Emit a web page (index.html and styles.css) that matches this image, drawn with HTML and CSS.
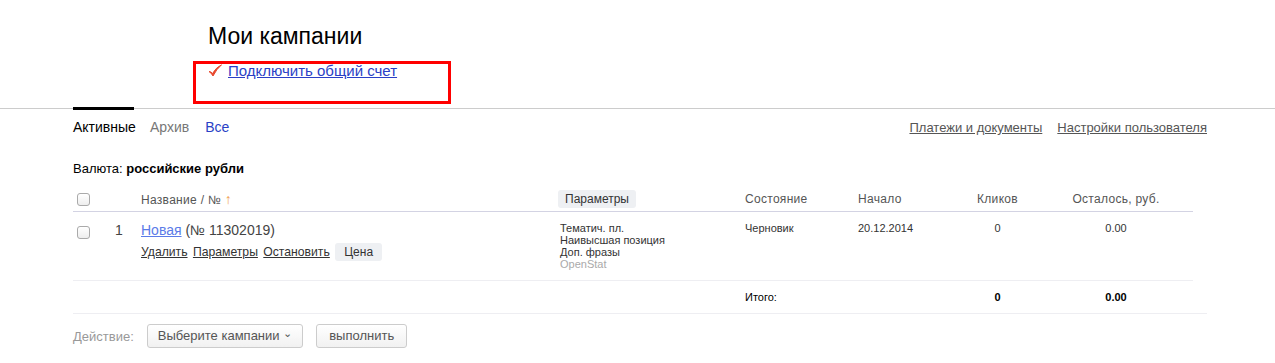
FILE: index.html
```html
<!DOCTYPE html>
<html lang="ru">
<head>
  <meta charset="UTF-8" />
  <meta name="viewport" content="width=device-width, initial-scale=1.0"/>
  <title>Мои кампании</title>
  <link rel="stylesheet" href="styles.css">
</head>
<body>
  <div class="top">
    <h1>Мои кампании</h1>
    <div class="account">
      <svg class="check" width="14" height="13" viewBox="0 0 14 13">
        <path d="M1 7.5 Q3 7.5 4.5 9.5 Q8 3.5 13.5 0.8 Q8.5 5 5 12 Q3.5 9 1 7.5 Z" fill="#e8472c" stroke="#e8472c" stroke-width="1" stroke-linejoin="round"/>
      </svg>
      <a href="#">Подключить общий счет</a>
    </div>
    <div class="highlight"></div>
  </div>

  <div class="nav">
    <div class="tabs">
      <span class="tab active">Активные</span>
      <span class="tab">Архив</span>
      <a class="tab link" href="#">Все</a>
    </div>
    <div class="side-links">
      <a href="#">Платежи и документы</a>
      <a href="#">Настройки пользователя</a>
    </div>
  </div>

  <div class="content">
    <p class="currency">Валюта: <b>российские рубли</b></p>

    <table class="campaigns">
      <colgroup>
        <col style="width:32px">
        <col style="width:36px">
        <col style="width:417px">
        <col style="width:187px">
        <col style="width:113px">
        <col style="width:87px">
        <col style="width:105px">
        <col style="width:143px">
      </colgroup>
      <thead>
        <tr>
          <th><span class="box"></span></th>
          <th></th>
          <th>Название / № <span class="arrow">&uarr;</span></th>
          <th><span class="btn small">Параметры</span></th>
          <th>Состояние</th>
          <th>Начало</th>
          <th class="center">Кликов</th>
          <th class="center rest">Осталось, руб.</th>
        </tr>
      </thead>
      <tbody>
        <tr class="item">
          <td><span class="box"></span></td>
          <td class="num">1</td>
          <td>
            <div class="name"><a href="#">Новая</a> (№ 11302019)</div>
            <div class="actions">
              <a href="#">Удалить</a>
              <a href="#">Параметры</a>
              <a href="#">Остановить</a>
              <span class="btn small">Цена</span>
            </div>
          </td>
          <td class="params">
            Тематич. пл.<br>
            Наивысшая позиция<br>
            Доп. фразы<br>
            <span class="muted">OpenStat</span>
          </td>
          <td class="small-text">Черновик</td>
          <td class="small-text">20.12.2014</td>
          <td class="small-text center">0</td>
          <td class="small-text center rest">0.00</td>
        </tr>
        <tr class="total">
          <td></td>
          <td></td>
          <td></td>
          <td></td>
          <td>Итого:</td>
          <td></td>
          <td class="center"><b>0</b></td>
          <td class="center rest"><b>0.00</b></td>
        </tr>
      </tbody>
    </table>

    <div class="footer">
      <span class="label">Действие:</span>
      <span class="btn">Выберите кампании <span class="caret">&#8964;</span></span>
      <span class="btn run">выполнить</span>
    </div>
  </div>
</body>
</html>
```

FILE: styles.css
```css
body {
  margin: 0;
  font-family: "Liberation Sans", Arial, sans-serif;
  color: #000;
  background: #fff;
}

a {
  color: #2a3fc6;
}

.top {
  position: relative;
  padding: 22px 0 0 208px;
  height: 86px;
  box-sizing: border-box;
}

h1 {
  margin: 0;
  font-size: 23px;
  font-weight: normal;
  line-height: 28px;
}

.account {
  margin-top: 12px;
  font-size: 15px;
  line-height: 18px;
  display: flex;
  align-items: center;
  gap: 6px;
}

.check {
  margin-top: -2px;
}

.highlight {
  position: absolute;
  left: 193px;
  top: 61px;
  width: 252px;
  height: 37px;
  border: 3px solid #f00;
}

.nav {
  border-top: 1px solid #ccc;
  margin-top: 22px;
  padding: 0 68px 0 73px;
  display: flex;
  justify-content: space-between;
}

.tabs {
  display: flex;
  gap: 16px;
}

.tab {
  font-size: 14px;
  color: #777;
  padding-top: 10px;
  text-decoration: none;
}

.tab.active {
  color: #000;
  border-top: 3px solid #000;
  margin-top: -2px;
  padding-top: 9px;
  width: 61px;
}

.tab.link {
  color: #2a3fc6;
}

.side-links {
  display: flex;
  gap: 15px;
  padding-top: 11px;
  font-size: 13px;
}

.side-links a {
  color: #555;
}

.content {
  padding: 0 68px 0 73px;
}

.currency {
  font-size: 13px;
  margin: 26px 0 0;
  line-height: 16px;
}

.campaigns {
  width: 1120px;
  table-layout: fixed;
  border-collapse: collapse;
  margin-top: 10px;
}

.campaigns th {
  font-size: 12px;
  font-weight: normal;
  color: #555;
  text-align: left;
  letter-spacing: 0.3px;
  height: 23px;
  padding: 0 0 1px;
  vertical-align: middle;
  border-bottom: 1px solid #d3d3e3;
}

.campaigns td {
  padding: 0;
  vertical-align: top;
}

.center {
  text-align: center !important;
}

.rest {
  padding-right: 11px !important;
}

.box {
  display: inline-block;
  width: 11px;
  height: 11px;
  margin-left: 4px;
  border: 1px solid #aaa;
  border-radius: 3px;
  background: linear-gradient(#fff, #eee);
  vertical-align: middle;
}

.arrow {
  color: #f0a050;
  font-size: 14px;
}

.btn {
  display: inline-block;
  background: #eef0f3;
  border-radius: 3px;
  color: #333;
  font-size: 13px;
  padding: 2px 10px;
  letter-spacing: 0;
}

.btn.small {
  font-size: 12px;
  line-height: 14px;
  padding: 2px 8px;
}

.campaigns th .btn.small {
  padding: 2px 7px;
}

.item td {
  padding-top: 10px;
  height: 57px;
  border-bottom: 1px solid #eeeef2;
}

.item td:first-child {
  padding-top: 11px;
}

.num {
  font-size: 14px;
  color: #444;
  padding-left: 10px !important;
}

.name {
  font-size: 14px;
  color: #444;
  line-height: 16px;
}

.name a {
  color: #5b7be8;
}

.actions {
  margin-top: 5px;
  font-size: 12.2px;
  line-height: 18px;
}

.actions a {
  color: #333;
  margin-right: 2px;
}

.actions .btn.small {
  font-size: 12px;
  padding: 2px 9px;
}

.params {
  font-size: 11px;
  line-height: 12px;
  color: #333;
  padding-left: 2px !important;
}

.muted {
  color: #aaa;
}

.small-text {
  font-size: 11px;
  color: #333;
}

.total td {
  font-size: 11px;
  height: 32px;
  vertical-align: middle;
}

.footer {
  border-top: 1px solid #eeeef2;
  padding-top: 10px;
  display: flex;
  align-items: center;
  font-size: 13px;
}

.footer .label {
  color: #999;
  margin-right: 13px;
}

.footer .btn {
  background: linear-gradient(#fff, #f1f1f1);
  border: 1px solid #ccc;
  color: #555;
  padding: 4px 10px;
  line-height: 14px;
}

.caret {
  font-size: 11px;
  position: relative;
  top: -3px;
}

.footer .run {
  margin-left: 13px;
  padding: 4px 12px;
}
```
